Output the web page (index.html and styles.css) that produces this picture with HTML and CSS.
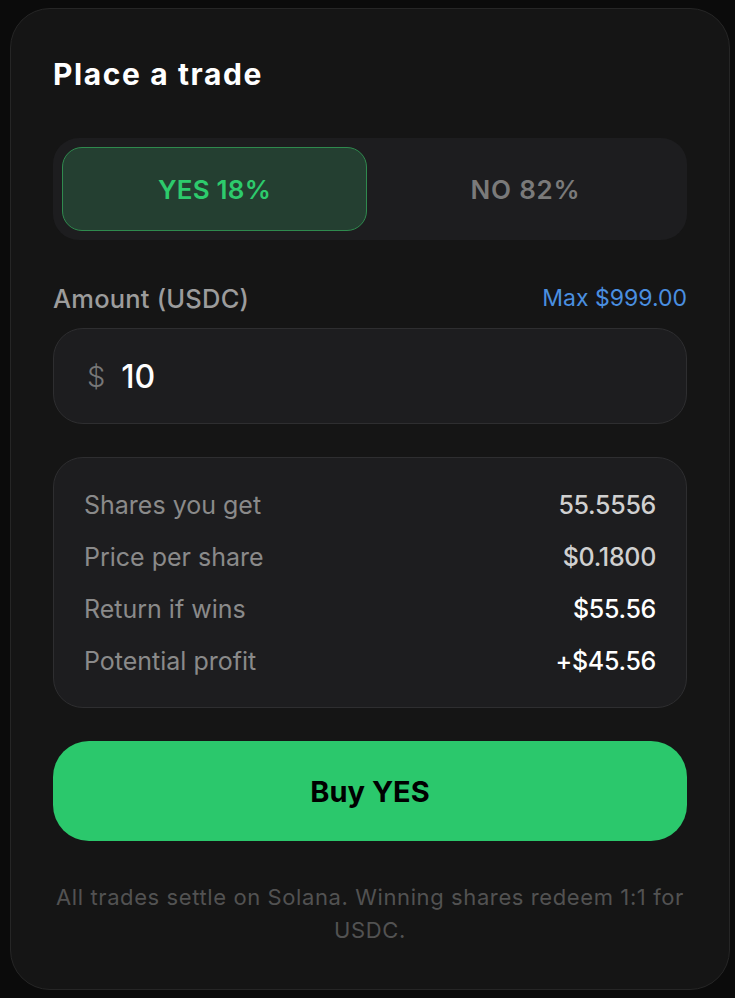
FILE: index.html
```html
<!DOCTYPE html>
<html lang="en">
<head>
    <meta charset="UTF-8">
    <meta name="viewport" content="width=device-width, initial-scale=1.0">
    <title>Place a trade</title>
    <link rel="stylesheet" href="styles.css">
</head>
<body>
    <div class="trade-card">
        <h2 class="title">Place a trade</h2>

        <div class="side-toggle">
            <button class="side side-yes active">YES 18%</button>
            <button class="side side-no">NO 82%</button>
        </div>

        <div class="amount-head">
            <label for="amount">Amount (USDC)</label>
            <span class="max">Max $999.00</span>
        </div>

        <div class="amount-input">
            <span class="currency">$</span>
            <input type="text" id="amount" value="10">
        </div>

        <div class="summary">
            <div class="row">
                <span class="key">Shares you get</span>
                <span class="val">55.5556</span>
            </div>
            <div class="row">
                <span class="key">Price per share</span>
                <span class="val">$0.1800</span>
            </div>
            <div class="row">
                <span class="key">Return if wins</span>
                <span class="val strong">$55.56</span>
            </div>
            <div class="row">
                <span class="key">Potential profit</span>
                <span class="val strong">+$45.56</span>
            </div>
        </div>

        <button class="buy">Buy YES</button>

        <p class="note">All trades settle on Solana. Winning shares redeem 1:1 for USDC.</p>
    </div>
</body>
</html>
```

FILE: styles.css
```css
body {
    margin: 0;
    padding: 8px 0 0 10px;
    background-color: #0b0b0b;
    font-family: Inter, 'Noto Sans', sans-serif;
    min-height: 100vh;
    box-sizing: border-box;
}

.trade-card {
    width: 720px;
    box-sizing: border-box;
    padding: 48px 42px 42px;
    background-color: #151515;
    border: 1px solid #262626;
    border-radius: 40px;
}

.title {
    margin: 0 0 47px;
    color: #ffffff;
    font-size: 30px;
    line-height: 34px;
    font-weight: 700;
    letter-spacing: 1.6px;
}

.side-toggle {
    display: grid;
    grid-template-columns: 1fr 1fr;
    gap: 6px;
    padding: 9px;
    background-color: #1d1d1f;
    border-radius: 26px;
}

.side {
    height: 84px;
    border: 1px solid transparent;
    border-radius: 20px;
    background: transparent;
    font-family: inherit;
    font-size: 26px;
    font-weight: 600;
    letter-spacing: 0.2px;
    color: #7a7a7a;
    cursor: pointer;
}

.side-no {
    letter-spacing: 0.8px;
}

.side-yes.active {
    background-color: #243f31;
    border-color: #2f8a4e;
    color: #2dcb6c;
}

.amount-head {
    display: flex;
    justify-content: space-between;
    align-items: center;
    margin: 46px 0 18px;
    height: 24px;
}

.amount-head label {
    color: #9c9c9c;
    font-size: 25.5px;
    font-weight: 500;
    letter-spacing: 0.2px;
}

.max {
    color: #4a8fe0;
    font-size: 23px;
}

.amount-input {
    display: flex;
    align-items: center;
    gap: 16px;
    height: 96px;
    box-sizing: border-box;
    padding: 0 33px;
    background-color: #1d1d1f;
    border: 1px solid #2e2e30;
    border-radius: 30px;
}

.currency {
    color: #777777;
    font-size: 29px;
    font-weight: 300;
}

.amount-input input {
    flex: 1;
    min-width: 0;
    background: transparent;
    border: none;
    outline: none;
    color: #ffffff;
    font-family: inherit;
    font-size: 32px;
    font-weight: 500;
    padding: 0;
}

.summary {
    display: flex;
    flex-direction: column;
    gap: 22px;
    margin-top: 33px;
    padding: 32px 30px 31px;
    background-color: #1d1d1f;
    border: 1px solid #2e2e30;
    border-radius: 30px;
}

.row {
    display: flex;
    justify-content: space-between;
    line-height: 30px;
    font-size: 25px;
}

.key {
    color: #8a8a8a;
}

.val {
    color: #d0d0d0;
    font-weight: 500;
    letter-spacing: -0.3px;
}

.val.strong {
    color: #ffffff;
}

.buy {
    display: block;
    width: 100%;
    height: 100px;
    margin-top: 33px;
    border: none;
    border-radius: 36px;
    background-color: #2bc86c;
    color: #000000;
    font-family: inherit;
    font-size: 29px;
    font-weight: 700;
    cursor: pointer;
}

.note {
    margin: 40px 0 0;
    text-align: center;
    color: #525252;
    font-size: 22px;
    line-height: 33px;
    letter-spacing: 0.6px;
}
```
